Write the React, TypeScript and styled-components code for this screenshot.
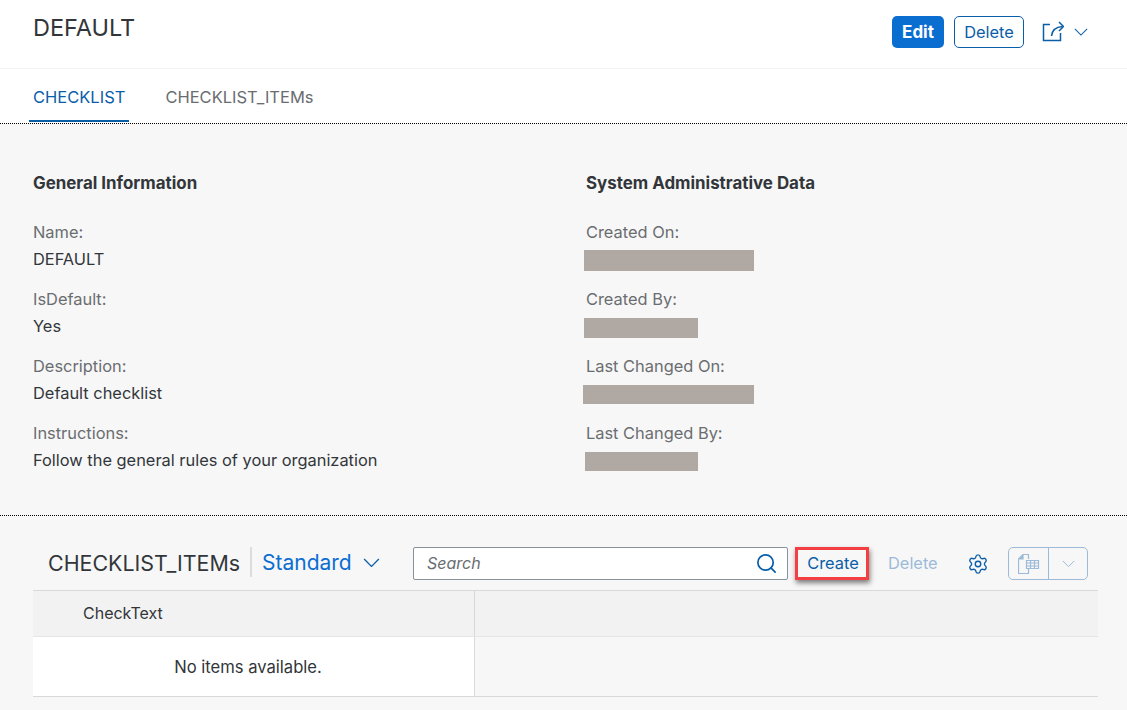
import React from 'react';
import styled, { createGlobalStyle } from 'styled-components';
import { Search, Settings } from 'lucide-react';

const Global = createGlobalStyle`
    html, body {
        margin: 0;
        padding: 0;
        background: #f7f7f7;
    }
    body {
        font-family: Inter, "Liberation Sans", sans-serif;
        font-size: 16.4px;
        color: #32363a;
        overflow: hidden;
    }
`;

const Page = styled.div`
    width: 1127px;
    height: 710px;
    overflow: hidden;
`;

const Header = styled.header`
    height: 68px;
    background: #fff;
    border-bottom: 1px solid #f2f2f2;
    display: flex;
    justify-content: space-between;
    padding: 0 39px 0 33px;
`;

const Title = styled.h1`
    margin: 14px 0 0;
    font-size: 23.5px;
    line-height: 28px;
    font-weight: 400;
`;

const Actions = styled.div`
    display: flex;
    align-items: center;
    height: 64px;
`;

const Emphasized = styled.button`
    width: 52px;
    height: 32px;
    padding: 0;
    border: none;
    border-radius: 5px;
    background: #0a6ed1;
    color: #fff;
    font: 700 17px Inter, sans-serif;
`;

const Outlined = styled.button`
    width: 70px;
    height: 32px;
    margin-left: 10px;
    padding: 0;
    border: 1px solid #0a5ea8;
    border-radius: 5px;
    background: #fff;
    color: #0a5ea8;
    font: 400 16.4px Inter, sans-serif;
`;

const ShareIcon = styled.svg`
    width: 22px;
    height: 22px;
    margin-left: 18px;
    margin-right: 10px;
`;

const Tabs = styled.nav`
    height: 54px;
    background: #fff;
    display: flex;
    padding-left: 29px;
    gap: 32px;
`;

const Tab = styled.div<{ $active?: boolean }>`
    height: 53px;
    box-sizing: border-box;
    padding: 18px 4px 0;
    font-size: 16.5px;
    line-height: 20px;
    color: ${(p) => (p.$active ? '#0a5ea8' : '#6a6d70')};
    border-bottom: 2px solid ${(p) => (p.$active ? '#0a5ea8' : 'transparent')};
`;

const Dotted = styled.div`
    height: 1px;
    border-top: 1px dotted #000;
`;

const Details = styled.section`
    height: 390px;
    box-sizing: border-box;
    padding: 48px 33px 0;
    display: grid;
    grid-template-columns: 553px 1fr;
`;

const Column = styled.div`
    display: flex;
    flex-direction: column;
`;

const GroupTitle = styled.h2`
    margin: 0 0 29px;
    font-size: 16.9px;
    line-height: 20px;
    font-weight: 700;
`;

const Field = styled.div`
    height: 67px;
`;

const Label = styled.div`
    line-height: 20px;
    color: #6a6d70;
`;

const Value = styled.div`
    margin-top: 7px;
    line-height: 20px;
`;

const Redacted = styled.div<{ $w: number; $x: number; $h: number; $y: number }>`
    width: ${(p) => p.$w}px;
    height: ${(p) => p.$h}px;
    margin-left: ${(p) => p.$x}px;
    margin-top: ${(p) => p.$y}px;
    background: #b0a8a2;
`;

const Toolbar = styled.div`
    height: 33px;
    margin-top: 30px;
    padding-left: 48px;
    display: flex;
    align-items: center;
`;

const TableTitle = styled.div`
    width: 193px;
    margin-bottom: 2px;
    font-size: 21.4px;
    line-height: 30px;
    white-space: nowrap;
`;

const Divider = styled.div`
    width: 2px;
    height: 30px;
    margin: 0 10px 3px 9px;
    background: #dcdcdc;
`;

const Variant = styled.div`
    font-size: 21px;
    line-height: 30px;
    margin-bottom: 2px;
    color: #0a6ed1;
    display: flex;
    align-items: center;
    gap: 11px;
    width: 151px;
`;

const SearchBox = styled.div`
    width: 375px;
    height: 33px;
    box-sizing: border-box;
    border: 1px solid #89919a;
    border-radius: 2px;
    background: #fff;
    display: flex;
    align-items: center;
    justify-content: space-between;
    padding: 0 9px 0 13px;
    font-size: 16px;
    font-style: italic;
    color: #6a6d70;
`;

const SearchLabel = styled.span`
    margin-bottom: 2px;
`;

const HighlightedButton = styled.button`
    width: 74px;
    height: 33px;
    margin-left: 7px;
    padding: 0 0 1px 2px;
    border: 3px solid #f33f42;
    background: #f7f7f7;
    color: #0a5ea8;
    font: 400 16.4px Inter, sans-serif;
    box-shadow: 1px 3px 5px rgba(0, 0, 0, 0.5);
`;

const GhostButton = styled.div`
    margin-left: 19px;
    margin-bottom: 1px;
    width: 50px;
    color: #9dbbd8;
    white-space: nowrap;
`;

const GearWrap = styled.div`
    margin-left: 29px;
    display: flex;
    color: #0a5ea8;
`;

const ExportGroup = styled.div`
    margin-left: 19px;
    width: 80px;
    height: 33px;
    box-sizing: border-box;
    border: 1px solid #9dbbd8;
    border-radius: 5px;
    display: flex;
`;

const ExportPart = styled.div<{ $w: number }>`
    width: ${(p) => p.$w}px;
    display: flex;
    align-items: center;
    justify-content: center;
    & + & {
        border-left: 1px solid #9dbbd8;
    }
`;

const Table = styled.div`
    margin: 10px 29px 0 33px;
    border-top: 1px solid #d9d9d9;
`;

const Row = styled.div<{ $head?: boolean }>`
    display: grid;
    grid-template-columns: 442px 1fr;
    height: ${(p) => (p.$head ? 45 : 59)}px;
    border-bottom: 1px solid ${(p) => (p.$head ? '#e5e5e5' : '#d9d9d9')};
    background: ${(p) => (p.$head ? '#f2f2f2' : 'transparent')};
`;

const HeadCell = styled.div`
    border-right: 1px solid #d9d9d9;
    display: flex;
    align-items: center;
    padding: 0 0 2px 50px;
    font-size: 16px;
`;

const EmptyCell = styled.div`
    border-right: 1px solid #d9d9d9;
    display: flex;
    align-items: center;
    justify-content: center;
    padding-right: 11px;
    background: #fff;
    font-size: 16.6px;
`;

function Chevron({ w, color }: { w: number; color: string }) {
    return (
        <svg width={w} height={w / 2 + 1} viewBox="0 0 16 9" fill="none" stroke={color} strokeWidth="1.2">
            <path d="M1 1l7 7 7-7" />
        </svg>
    );
}

const leftFields = [
    ['Name:', 'DEFAULT'],
    ['IsDefault:', 'Yes'],
    ['Description:', 'Default checklist'],
    ['Instructions:', 'Follow the general rules of your organization'],
];

const rightFields: { label: string; w: number; x: number; h: number; y: number }[] = [
    { label: 'Created On:', w: 170, x: -2, h: 21, y: 8 },
    { label: 'Created By:', w: 114, x: -2, h: 20, y: 9 },
    { label: 'Last Changed On:', w: 171, x: -3, h: 19, y: 9 },
    { label: 'Last Changed By:', w: 113, x: -1, h: 19, y: 9 },
];

export default function App() {
    return (
        <Page>
            <Global />
            <Header>
                <Title>DEFAULT</Title>
                <Actions>
                    <Emphasized>Edit</Emphasized>
                    <Outlined>Delete</Outlined>
                    <ShareIcon viewBox="0 0 22 22" fill="none" stroke="#0a5ea8" strokeWidth="1.5">
                        <path d="M8 3.500H1.500V19.500H18.500V12" />
                        <path d="M9.500 15c.5-5 4-9 11-9.500" />
                        <path d="M17 1l4.500 4.500L17 10" />
                    </ShareIcon>
                    <Chevron w={14} color="#0a5ea8" />
                </Actions>
            </Header>
            <Tabs>
                <Tab $active>CHECKLIST</Tab>
                <Tab>CHECKLIST_ITEMs</Tab>
            </Tabs>
            <Dotted />
            <Details>
                <Column>
                    <GroupTitle>General Information</GroupTitle>
                    {leftFields.map(([label, value]) => (
                        <Field key={label}>
                            <Label>{label}</Label>
                            <Value>{value}</Value>
                        </Field>
                    ))}
                </Column>
                <Column>
                    <GroupTitle>System Administrative Data</GroupTitle>
                    {rightFields.map(({ label, w, x, h, y }) => (
                        <Field key={label}>
                            <Label>{label}</Label>
                            <Redacted $w={w} $x={x} $h={h} $y={y} />
                        </Field>
                    ))}
                </Column>
            </Details>
            <Dotted />
            <Toolbar>
                <TableTitle>CHECKLIST_ITEMs</TableTitle>
                <Divider />
                <Variant>
                    Standard
                    <Chevron w={17} color="#0a5ea8" />
                </Variant>
                <SearchBox>
                    <SearchLabel>Search</SearchLabel>
                    <Search size={23} strokeWidth={1.8} color="#0a5ea8" />
                </SearchBox>
                <HighlightedButton>Create</HighlightedButton>
                <GhostButton>Delete</GhostButton>
                <GearWrap>
                    <Settings size={22} strokeWidth={1.5} />
                </GearWrap>
                <ExportGroup>
                    <ExportPart $w={40}>
                        <svg width="22" height="24" viewBox="0 0 22 24" fill="none" stroke="#9dbbd8" strokeWidth="1.2">
                            <path d="M5 2.500H10.500V7M5 2.500 0.500 7V21.500H10.500V17" />
                            <path d="M5 2.500V7H0.500" fill="#9dbbd8" />
                            <path d="M8.500 8.500H20.500V16.500H8.500ZM8.500 11H20.500M8.500 14H20.500M12.500 8.500V16.500M16.500 8.500V16.500" />
                        </svg>
                    </ExportPart>
                    <ExportPart $w={38}>
                        <Chevron w={13} color="#9dbbd8" />
                    </ExportPart>
                </ExportGroup>
            </Toolbar>
            <Table>
                <Row $head>
                    <HeadCell>CheckText</HeadCell>
                    <div />
                </Row>
                <Row>
                    <EmptyCell>No items available.</EmptyCell>
                    <div />
                </Row>
            </Table>
        </Page>
    );
}
